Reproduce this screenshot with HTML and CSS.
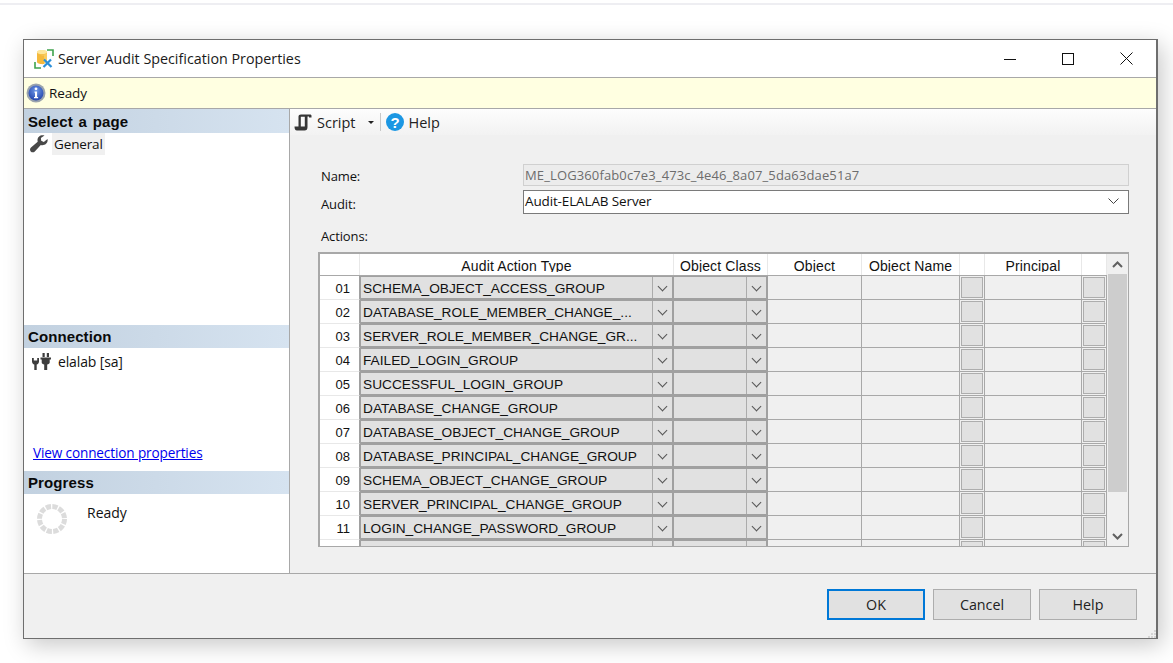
FILE: index.html
```html
<!DOCTYPE html>
<html lang="en">
<head>
<meta charset="utf-8">
<title>Server Audit Specification Properties</title>
<link rel="stylesheet" href="styles.css">
</head>
<body>
<div class="topline"></div>
<div class="window">
  <header class="titlebar">
    <svg class="app-icon" width="20" height="20" viewBox="0 0 20 20"><path d="M1 13v6h6M13 1h6v6" fill="none" stroke="#3fa34d" stroke-width="1.600"/><path d="M3 3.500c0-3 10-3 10 0v8.500l-3 3c-3 .5-7-.5-7-2z" fill="#f5b93c"/><path d="M3 4c1.500 2 8.500 2 10 0v8l-3 3V6.500C8 6.500 5 6 3 4z" fill="#fbdc7c" opacity=".55"/><ellipse cx="8" cy="3" rx="5" ry="2" fill="#fde79c"/><path d="M9.500 18l7.500-7.500M17.500 18L10 10.500" stroke="#2b8fd8" stroke-width="2.200"/></svg>
    <span class="title">Server Audit Specification Properties</span>
    <div class="winbtns">
      <svg width="12" height="12" viewBox="0 0 12 12"><path d="M0 6.500h12" stroke="#111"/></svg>
      <svg width="12" height="12" viewBox="0 0 12 12"><rect x=".5" y=".5" width="11" height="11" fill="none" stroke="#111"/></svg>
      <svg width="13" height="13" viewBox="0 0 13 13"><path d="M.5.500l12 12M12.500.500l-12 12" stroke="#111"/></svg>
    </div>
  </header>
  <div class="statusbar">
    <svg width="20" height="20" viewBox="0 0 20 20"><defs><radialGradient id="ib" cx=".5" cy=".35" r=".7"><stop offset="0" stop-color="#6f9ae8"/><stop offset="1" stop-color="#1f3fa8"/></radialGradient></defs><circle cx="10" cy="10" r="9.500" fill="#9aa3ad"/><circle cx="10" cy="10" r="7.500" fill="url(#ib)"/><circle cx="10" cy="5.800" r="1.400" fill="#fff"/><path d="M8.500 8.500h2.600v5.500h1v1.200H8v-1.200h1V9.700H8.500z" fill="#fff"/></svg>
    <span>Ready</span>
  </div>
  <div class="body">
    <aside class="sidebar">
      <section class="side-pages">
        <h2 class="side-head">Select a page</h2>
        <div class="page-item">
          <svg width="18" height="18" viewBox="0 0 18 18"><path d="M17.500 4l-3.700 3-2.600-1.200-.3-2.800L14.500.500C11-.800 7.500 1.500 7.500 5c0 .6.100 1.200.2 1.700L1 12.500c-1.300 1.100-1.200 2.800-.3 3.900 1.100 1.200 3 1.300 4.100 0L10.800 10c3.700 1 7.700-1.800 6.700-6z" fill="#484848"/></svg>
          <span class="page-name">General</span>
        </div>
      </section>
      <section class="side-conn">
        <h2 class="side-head">Connection</h2>
        <div class="conn-item">
          <svg width="19" height="18" viewBox="0 0 19 18"><path d="M0 5v3.500c0 1.600 1 2.700 2.300 3V17h2.400v-5.500C6 11.200 7 10.100 7 8.500V5H5.200v2.600H1.800V5zM10.500 0h2.200v4h-2.200zM14.800 0H17v4h-2.200zM8.500 4.500h10.500v2h-1.300v3c0 1-1.200 1.900-2.500 2.100V17h-3v-5.400c-1.300-.2-2.500-1.100-2.500-2.100v-3H8.500z" fill="#3d3d3d"/></svg>
          <span>elalab [sa]</span>
        </div>
        <a class="conn-link" href="#">View connection properties</a>
      </section>
      <section class="side-progress">
        <h2 class="side-head">Progress</h2>
        <div class="progress-item">
          <svg width="32" height="32" viewBox="0 0 32 32"><circle cx="16" cy="16" r="12.500" fill="none" stroke="#dcdcdc" stroke-width="5" stroke-dasharray="5.200 1.340"/></svg>
          <span>Ready</span>
        </div>
      </section>
    </aside>
    <main class="main">
      <div class="toolbar">
        <svg width="18" height="18" viewBox="0 0 18 18"><path d="M7 1.500h9c1 0 1.500.5 1.500 1.500v1.500h-2.500V3.500h-1.500V14c0 2.500-1 3.500-3 3.500H3C1.300 17.500.5 16 .5 13.500H4.500V3.500c0-1.300 1-2 2.500-2zM6.800 3.700v9.800H10.800V3.700z" fill="#363636" fill-rule="evenodd"/></svg>
        <span class="tb-script">Script</span>
        <span class="tb-caret"></span>
        <span class="tb-sep"></span>
        <svg width="18" height="18" viewBox="0 0 18 18"><circle cx="9" cy="9" r="9" fill="#1c97e3"/><text x="9" y="14.500" text-anchor="middle" class="help-q">?</text></svg>
        <span class="tb-help">Help</span>
      </div>
      <div class="form">
        <label class="lbl">Name:</label>
        <div class="name-input">ME_LOG360fab0c7e3_473c_4e46_8a07_5da63dae51a7</div>
        <label class="lbl lbl-audit">Audit:</label>
        <div class="audit-select"><span>Audit-ELALAB Server</span><svg class="chev" width="11" height="6" viewBox="0 0 11 6"><path d="M.5.500l5 5 5-5" fill="none" stroke="#444"/></svg></div>
      </div>
      <div class="actions-label">Actions:</div>
      <div class="grid-wrap">
        <div class="grid">
          <div class="row head">
            <div class="hc"></div><div class="hc"><span>Audit Action Type</span></div><div class="hc"><span>Object Class</span></div><div class="hc"><span>Object</span></div><div class="hc"><span>Object Name</span></div><div class="hc"></div><div class="hc"><span>Principal</span></div><div class="hc"></div>
          </div>
          <div class="row"><div class="num">01</div><div class="combo"><span class="val">SCHEMA_OBJECT_ACCESS_GROUP</span><span class="dd"></span></div><div class="combo"><span class="val"></span><span class="dd"></span></div><div class="cell"></div><div class="cell"></div><div class="bcell"><span class="btn"></span></div><div class="cell"></div><div class="bcell"><span class="btn"></span></div></div>
          <div class="row"><div class="num">02</div><div class="combo"><span class="val">DATABASE_ROLE_MEMBER_CHANGE_...</span><span class="dd"></span></div><div class="combo"><span class="val"></span><span class="dd"></span></div><div class="cell"></div><div class="cell"></div><div class="bcell"><span class="btn"></span></div><div class="cell"></div><div class="bcell"><span class="btn"></span></div></div>
          <div class="row"><div class="num">03</div><div class="combo"><span class="val">SERVER_ROLE_MEMBER_CHANGE_GR...</span><span class="dd"></span></div><div class="combo"><span class="val"></span><span class="dd"></span></div><div class="cell"></div><div class="cell"></div><div class="bcell"><span class="btn"></span></div><div class="cell"></div><div class="bcell"><span class="btn"></span></div></div>
          <div class="row"><div class="num">04</div><div class="combo"><span class="val">FAILED_LOGIN_GROUP</span><span class="dd"></span></div><div class="combo"><span class="val"></span><span class="dd"></span></div><div class="cell"></div><div class="cell"></div><div class="bcell"><span class="btn"></span></div><div class="cell"></div><div class="bcell"><span class="btn"></span></div></div>
          <div class="row"><div class="num">05</div><div class="combo"><span class="val">SUCCESSFUL_LOGIN_GROUP</span><span class="dd"></span></div><div class="combo"><span class="val"></span><span class="dd"></span></div><div class="cell"></div><div class="cell"></div><div class="bcell"><span class="btn"></span></div><div class="cell"></div><div class="bcell"><span class="btn"></span></div></div>
          <div class="row"><div class="num">06</div><div class="combo"><span class="val">DATABASE_CHANGE_GROUP</span><span class="dd"></span></div><div class="combo"><span class="val"></span><span class="dd"></span></div><div class="cell"></div><div class="cell"></div><div class="bcell"><span class="btn"></span></div><div class="cell"></div><div class="bcell"><span class="btn"></span></div></div>
          <div class="row"><div class="num">07</div><div class="combo"><span class="val">DATABASE_OBJECT_CHANGE_GROUP</span><span class="dd"></span></div><div class="combo"><span class="val"></span><span class="dd"></span></div><div class="cell"></div><div class="cell"></div><div class="bcell"><span class="btn"></span></div><div class="cell"></div><div class="bcell"><span class="btn"></span></div></div>
          <div class="row"><div class="num">08</div><div class="combo"><span class="val">DATABASE_PRINCIPAL_CHANGE_GROUP</span><span class="dd"></span></div><div class="combo"><span class="val"></span><span class="dd"></span></div><div class="cell"></div><div class="cell"></div><div class="bcell"><span class="btn"></span></div><div class="cell"></div><div class="bcell"><span class="btn"></span></div></div>
          <div class="row"><div class="num">09</div><div class="combo"><span class="val">SCHEMA_OBJECT_CHANGE_GROUP</span><span class="dd"></span></div><div class="combo"><span class="val"></span><span class="dd"></span></div><div class="cell"></div><div class="cell"></div><div class="bcell"><span class="btn"></span></div><div class="cell"></div><div class="bcell"><span class="btn"></span></div></div>
          <div class="row"><div class="num">10</div><div class="combo"><span class="val">SERVER_PRINCIPAL_CHANGE_GROUP</span><span class="dd"></span></div><div class="combo"><span class="val"></span><span class="dd"></span></div><div class="cell"></div><div class="cell"></div><div class="bcell"><span class="btn"></span></div><div class="cell"></div><div class="bcell"><span class="btn"></span></div></div>
          <div class="row"><div class="num">11</div><div class="combo"><span class="val">LOGIN_CHANGE_PASSWORD_GROUP</span><span class="dd"></span></div><div class="combo"><span class="val"></span><span class="dd"></span></div><div class="cell"></div><div class="cell"></div><div class="bcell"><span class="btn"></span></div><div class="cell"></div><div class="bcell"><span class="btn"></span></div></div>
          <div class="row"><div class="num"></div><div class="combo"><span class="val"></span><span class="dd"></span></div><div class="combo"><span class="val"></span><span class="dd"></span></div><div class="cell"></div><div class="cell"></div><div class="bcell"><span class="btn"></span></div><div class="cell"></div><div class="bcell"><span class="btn"></span></div></div>
        </div>
        <div class="scrollbar">
          <svg width="11" height="7" viewBox="0 0 11 7"><path d="M1 6l4.500-4.500L10 6" fill="none" stroke="#606060" stroke-width="2"/></svg>
          <div class="track"><div class="thumb"></div></div>
          <svg width="11" height="7" viewBox="0 0 11 7"><path d="M1 1l4.500 4.500L10 1" fill="none" stroke="#606060" stroke-width="2"/></svg>
        </div>
      </div>
    </main>
  </div>
  <footer class="footer">
    <button class="fbtn primary">OK</button>
    <button class="fbtn">Cancel</button>
    <button class="fbtn">Help</button>
    <svg class="grip" width="8" height="8" viewBox="0 0 8 8"><path d="M6 0h2v2H6zM3 3h2v2H3zM6 3h2v2H6zM0 6h2v2H0zM3 6h2v2H3zM6 6h2v2H6z" fill="#d4d4d4"/></svg>
  </footer>
</div>
</body>
</html>
```
FILE: styles.css
```css
* { box-sizing: border-box; }
html, body { margin: 0; height: 100%; background: #fff; overflow: hidden; }
body { font-family: "Open Sans", "Liberation Sans", sans-serif; font-size: 13.500px; color: #111; }
.topline { height: 2px; margin-top: 3px; background: #eeeef2; }
.window {
  position: relative;
  width: 1135px; height: 600px;
  margin: 34px 0 0 23px;
  border: 1px solid #6e6e6e;
  border-right-width: 2px;
  background: #f0f0f0;
  box-shadow: 4px 6px 22px rgba(0,0,0,.22);
  display: flex; flex-direction: column;
}
.titlebar { height: 38px; background: #fff; display: flex; align-items: center; padding-left: 10px; flex: none; border-bottom: 1px solid #a8a8a8; }
.app-icon { flex: none; }
.title { margin-left: 4px; font-size: 14.300px; color: #1a1a1a; }
.winbtns { margin-left: auto; display: flex; align-items: center; gap: 46px; padding-right: 23px; }
.statusbar { height: 31px; flex: none; background: #ffffe1; border-bottom: 1px solid #a8a8a8; display: flex; align-items: center; padding-left: 2px; gap: 3px; font-size: 13.500px; letter-spacing: -.01em; }
.body { flex: 1; display: flex; min-height: 0; }
.sidebar { width: 266px; flex: none; background: #fff; border-right: 1px solid #a8a8a8; display: flex; flex-direction: column; }
.side-head { margin: 0; height: 24px; line-height: 26px; padding-left: 4px; font-family: "Liberation Sans", sans-serif; font-size: 15px; font-weight: bold; letter-spacing: .1px; word-spacing: 1.500px; color: #0a0a0a; background: linear-gradient(90deg, #c2d1e0, #d6e3f0); }
.side-conn .side-head, .side-progress .side-head { height: 23px; line-height: 24px; }
.side-pages { height: 216px; flex: none; }
.page-item { display: flex; align-items: center; height: 22px; padding-left: 6px; }
.page-name { background: #f0f0f0; margin-left: 4px; padding: 0 2px; font-size: 13.500px; height: 22px; line-height: 23px; letter-spacing: -.01em; }
.side-conn { height: 146px; flex: none; display: flex; flex-direction: column; }
.conn-item { display: flex; align-items: center; gap: 7px; padding: 2px 0 0 8px; font-size: 14px; height: 25px; letter-spacing: -.01em; }
.conn-link { margin: auto 0 10px 9px; color: #0000ee; font-size: 13.600px; letter-spacing: -.01em; line-height: 16px; }
.side-progress { flex: 1; }
.progress-item { display: flex; padding: 9px 0 0 12px; gap: 19px; }
.progress-item span { font-size: 14px; line-height: 20px; }
.main { flex: 1; min-width: 0; }
.toolbar { height: 26px; display: flex; align-items: center; padding-left: 4px; background: linear-gradient(180deg, #fdfdfd, #f2f2f2); font-size: 14.500px; }
.tb-script { margin-left: 5px; color: #222; }
.tb-caret { margin-left: 12px; border-style: solid; border-width: 3px 3px 0; border-color: #222 transparent transparent; }
.tb-sep { margin: 0 5px 0 6px; width: 1px; height: 18px; background: #c8c8c8; }
.tb-help { margin-left: 5px; color: #222; }
.help-q { font-family: "Liberation Sans", sans-serif; font-weight: bold; font-size: 15px; fill: #fff; }
.form { display: grid; grid-template-columns: 202px 606px; grid-template-rows: 22px 24px; row-gap: 4px; margin: 29px 0 0 31px; font-size: 13px; }
.lbl { line-height: 24px; letter-spacing: -.01em; }
.lbl-audit { padding-top: 2px; }
.name-input { border: 1px solid #d0d0d0; background: #ececec; color: #6d6d6d; padding-left: 1px; line-height: 20px; font-size: 13px; letter-spacing: .01em; }
.audit-select { border: 1px solid #7a7a7a; background: #fff; padding: 0 9px 2px 1px; display: flex; align-items: center; justify-content: space-between; font-size: 13.500px; letter-spacing: -.01em; }
.actions-label { margin: 13px 0 0 31px; font-size: 13px; line-height: 18px; letter-spacing: -.01em; }
.grid-wrap { display: flex; width: 811px; height: 295px; margin: 7px 0 0 28px; border: 1px solid #a8a8a8; border-top-width: 2px; border-left-width: 2px; overflow: hidden; }
.grid { width: 787px; flex: none; overflow: hidden; font-family: "Liberation Sans", sans-serif; }
.row { display: grid; grid-template-columns: 40px 314px 94px 94px 98px 25px 97px 25px; grid-template-rows: 24px; height: 24px; }
.row.head { grid-template-rows: 21px; height: 22px; border-bottom: 1px solid #a8a8a8; background: #fff; }
.hc { background: #fff; border-right: 1px solid #e8e8e8; text-align: center; font-size: 14px; letter-spacing: .01em; color: #111; }
.hc span { display: block; height: 18px; padding-top: 4px; line-height: 16px; overflow: hidden; }
.num { background: #fff; border-bottom: 1px solid #e8e8e8; border-right: 1px solid #a0a0a0; text-align: right; padding: 2px 9px 0 0; font-size: 13px; line-height: 21px; }
.combo { display: flex; background: #e1e1e1; border: 0 solid #a0a0a0; border-width: 1px 2px 2px 1px; font-size: 13.700px; }
.combo + .combo { border-left-width: 0; }
.val { flex: 1; min-width: 0; padding-left: 2px; height: 21px; line-height: 23px; white-space: nowrap; overflow: hidden; }
.dd { width: 20px; flex: none; border-left: 1px solid #ababab; position: relative; }
.dd::after { content: ""; position: absolute; left: 6px; top: 6px; width: 6px; height: 6px; border: solid #555; border-width: 0 1px 1px 0; transform: rotate(45deg); }
.cell, .bcell { background: #f0f0f0; border-right: 1px solid #a8a8a8; border-bottom: 1px solid #a8a8a8; }
.bcell { padding: 1px; }
.btn { display: block; height: 21px; background: #e1e1e1; border: 1px solid #adadad; }
.scrollbar { flex: 1; background: #f0f0f0; display: flex; flex-direction: column; align-items: center; }
.scrollbar svg { flex: none; margin: 7px 0 6px; }
.track { flex: 1; width: 19px; }
.thumb { height: 218px; background: #cdcdcd; }
.footer { height: 65px; flex: none; border-top: 1px solid #a8a8a8; display: flex; align-items: flex-start; justify-content: flex-end; gap: 8px; padding: 15px 19px 0 0; }
.fbtn { width: 98px; height: 31px; background: #e1e1e1; border: 1px solid #adadad; font-family: "Open Sans", "Liberation Sans", sans-serif; font-size: 14.300px; color: #222; padding: 0; }
.fbtn.primary { border: 2px solid #0078d7; }
.grip { position: absolute; right: 0; bottom: 0; }
```
